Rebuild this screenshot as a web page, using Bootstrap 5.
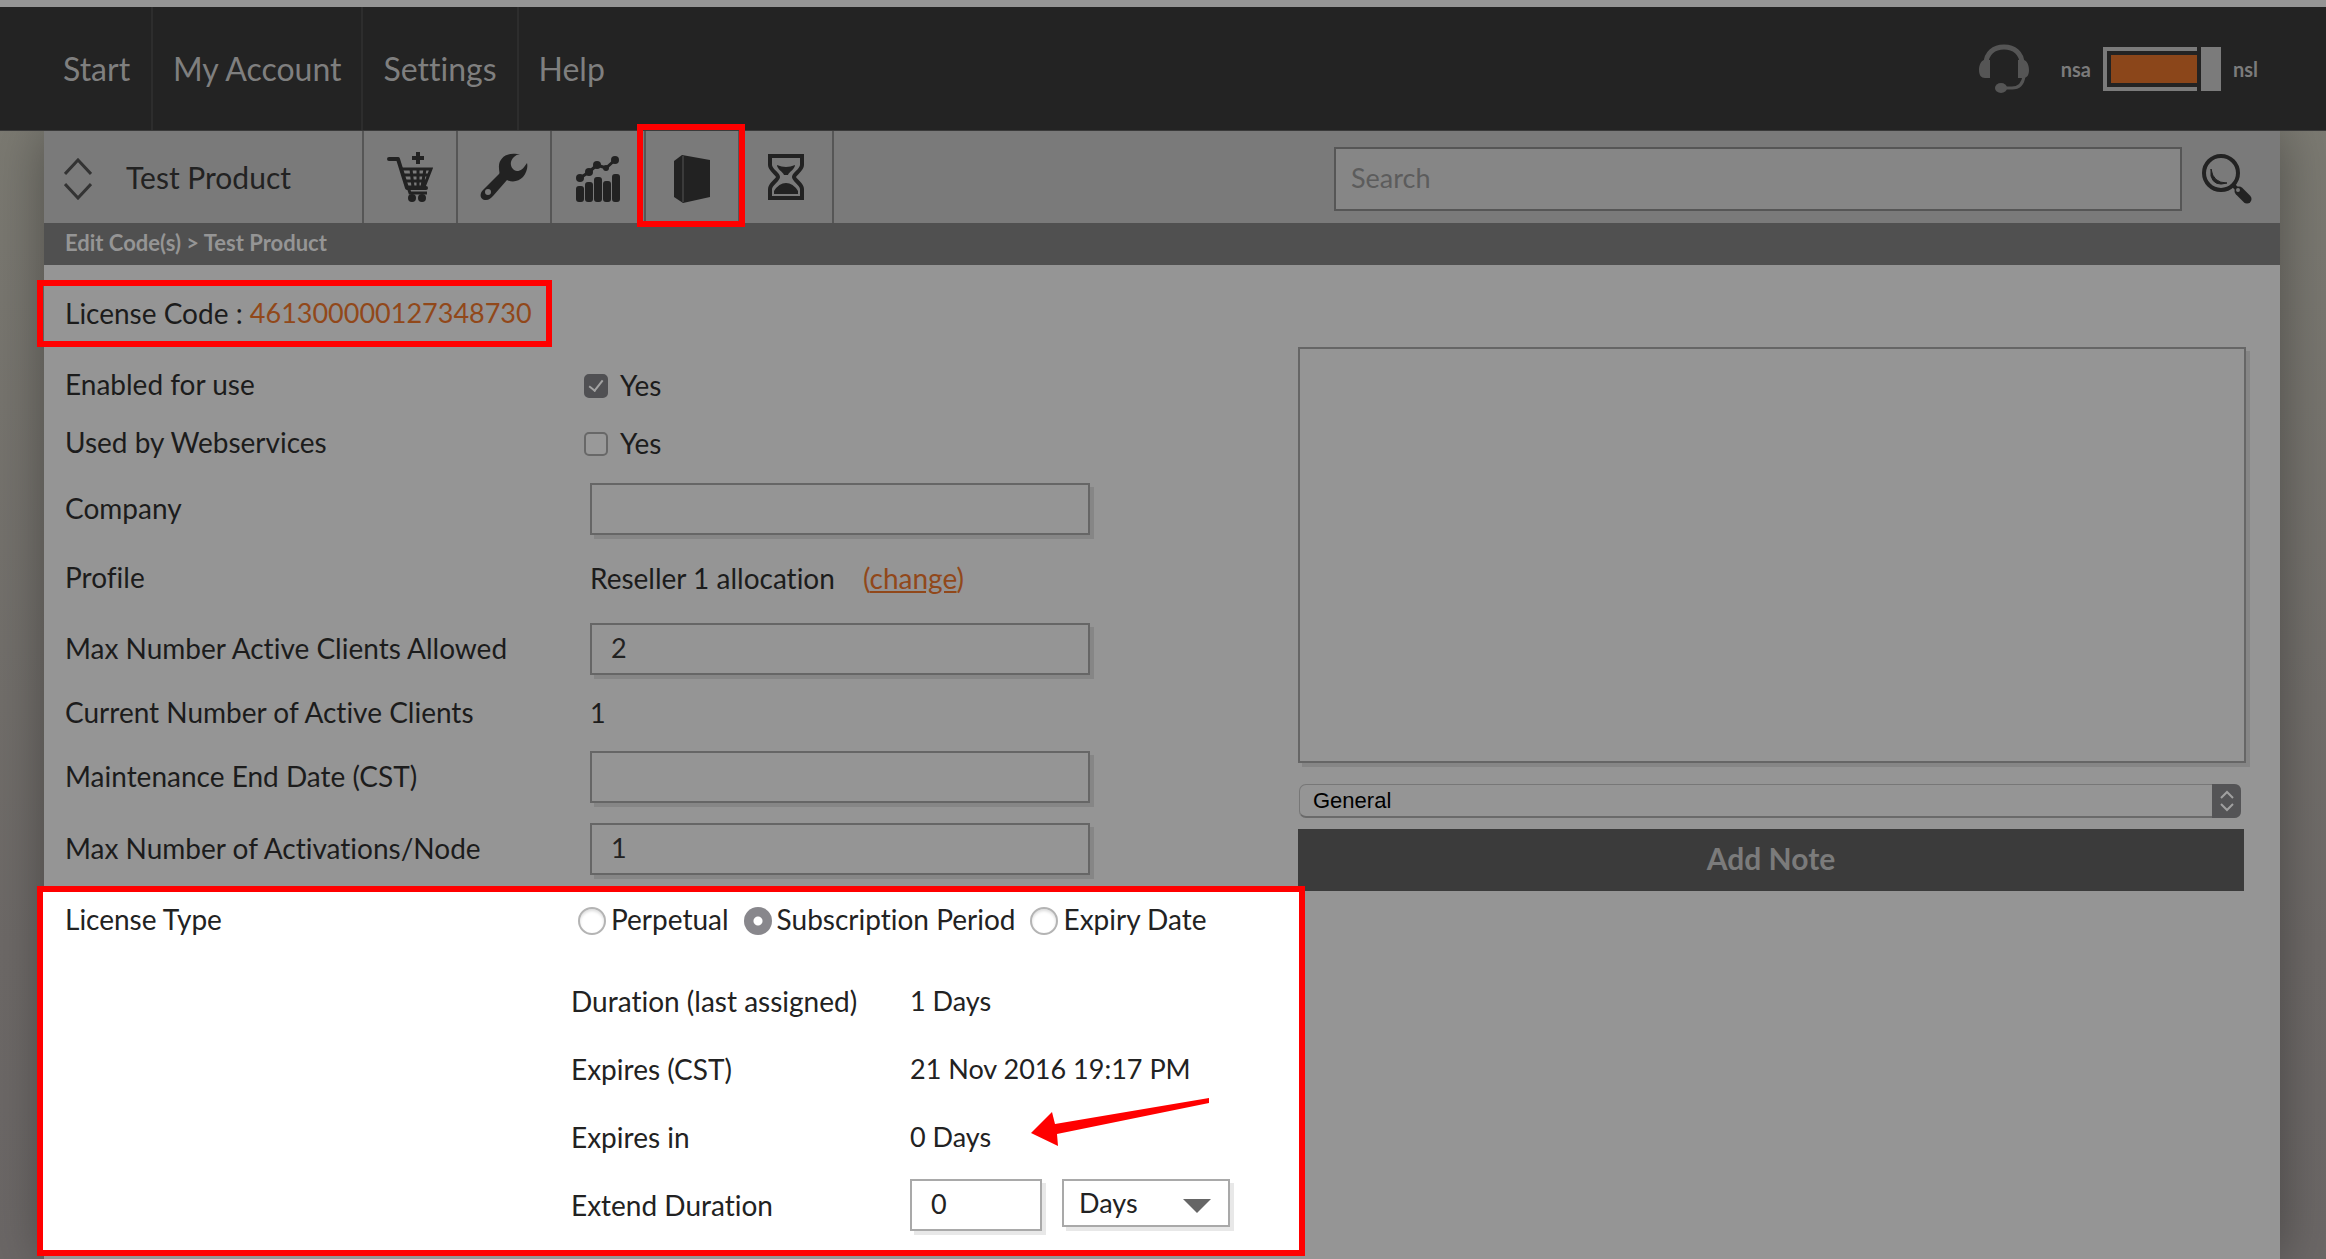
<!DOCTYPE html>
<html lang="en">
<head>
<meta charset="utf-8">
<meta name="viewport" content="width=device-width, initial-scale=1">
<title>Edit Code(s) - Test Product</title>
<link href="https://cdn.jsdelivr.net/npm/bootstrap@5.3.0/dist/css/bootstrap.min.css" rel="stylesheet">
<style>
  body { font-family: Lato, "Open Sans", sans-serif; font-size: 28px; line-height: 34px; color: #1c1c1c; font-variant-ligatures: none;
    background: linear-gradient(#7d7c73, #6d6967 75%, #6b6766); overflow-x: hidden; }
  .topbar { background: #232323; border-top: 7px solid #959595; border-bottom: 1px solid #3a3a3a; height: 131px; padding: 0 68px 0 24px; position: relative; z-index: 1; }
  .topbar .nav-link { color: #7f7f7f; font-size: 32px; padding: 0 20px; display: flex; align-items: center; border-left: 2px solid #2d2d2d; }
  .topbar .nav-item:first-child .nav-link { border-left: 0; padding-left: 39px; width: 127px; }
  .topbar .switch-text { color: #7b7b7b; font-size: 20px; font-weight: 700; line-height: 24px; }
  .switch { border: 0; padding: 0; background: none; width: 118px; height: 44px; }
  .panel { background: #959595; margin: 0 46px 0 44px; box-shadow: 0 0 50px rgba(0,0,0,.35); }
  .toolbar { background: #7a7a7a; height: 92px; }
  .toolbar .product { width: 318px; padding-left: 20px; font-size: 30px; color: #222; gap: 34px; }
  .toolbar .tool { width: 94px; border-left: 2px solid #565656; color: #222; position: relative; }
  .toolbar .tool-end { width: 96px; border-right: 2px solid #565656; }
  .marker { position: absolute; border: 6px solid #f00; inset: -7px -7px -4px -9px; z-index: 2; }
  .search { width: 848px; height: 64px; border: 2px solid #565656; border-radius: 0; background: #868686; font-size: 27px; padding: 0 15px 4px; }
  .search::placeholder { color: #5c5c5c; }
  .search:focus { background: #868686; }
  .find { margin: 0 28px 0 20px; }
  .crumbs { background: #505050; color: #959595; height: 42px; font-size: 22px; font-weight: 700; padding-left: 21px; line-height: 40px; }
  .crumbs a { color: inherit; text-decoration: none; }
  .form-side { flex: 0 1 1254px; }
  .note-side { flex: 1 1 0; padding: 82px 34px 0 0; }
  .code-box { border: 6px solid #f00; margin: 15px 0 9px -7px; padding: 0 20px 2px 22px; height: 67px; width: 515px; }
  .digits { font-size: 27px; }
  .orange { color: #91481a; }
  .line { padding-left: 21px; }
  .line-58 { height: 58px; } .line-74 { height: 74px; } .line-64 { height: 64px; }
  .line-78 { height: 78px; } .line-50 { height: 50px; } .line-66 { height: 66px; }
  .line .name { width: 525px; }
  .line .name, .type-head .name, .type-head label { padding-bottom: 2px; }
  .change-link { margin-left: 28px; }
  .field { border: 2px solid #666; border-radius: 0; background: #959595; color: #222; font-size: 27px; height: 52px; box-shadow: 4px 4px 0 #868686; padding: 0 19px 4px; }
  .field-wide { width: 500px; }
  .tick { appearance: none; width: 24px; height: 24px; border: 2px solid #686868; border-radius: 5px; margin: 2px 12px 0 -6px; background: #999; position: relative; }
  .tick:checked { background: #505053; border-color: #505053; }
  .tick:checked::after { content: ""; position: absolute; left: 6px; top: 1px; width: 8px; height: 14px; border: solid #a2a2a2; border-width: 0 2px 2px 0; transform: rotate(38deg); }
  .type-box { border: 6px solid #f00; background: #fff; margin: 4px -7px 0; padding-bottom: 11px; position: relative; z-index: 2; color: #222; }
  .type-head { height: 55px; padding-left: 22px; margin-bottom: 20px; }
  .type-head .name { width: 513px; }
  .type-head label { margin-right: 15px; }
  .dot { appearance: none; width: 28px; height: 28px; border-radius: 50%; border: 2px solid #b4b4b4; background: #fff; box-shadow: inset 0 2px 3px #ddd; margin: 2px 5px 0 0; }
  .dot:checked { border: 0; background: radial-gradient(circle, #fff 4px, #88878c 5px); box-shadow: none; }
  .type-line { height: 68px; padding-left: 528px; }
  .type-line .name { width: 339px; }
  .type-box .field { background: #fff; border-color: #a9a9a9; box-shadow: 4px 4px 0 #e8e8e8; }
  .type-box .short { width: 132px; margin-right: 20px; }
  .unit { width: 168px; height: 48px !important; appearance: none; padding: 0 15px !important; }
  .unit-mark { position: absolute; right: 19px; top: 20px; pointer-events: none; }
  .arrow { position: absolute; left: 988px; top: 206px; }
  .notes { border: 2px solid #666; border-radius: 0; background: #959595; height: 416px; width: 100%; box-shadow: 4px 4px 0 #868686; resize: none; display: block; }
  .kind-wrap { margin: 21px 5px 11px 1px; }
  .kind { appearance: none; width: 100%; height: 34px; border: 1px solid #777; border-bottom: 2px solid #6a6a6a; border-radius: 7px; background: #959595; color: #000; font: 22px/26px "Liberation Sans", Arial, sans-serif; padding: 1px 13px 0; display: block; }
  .kind-mark { position: absolute; right: 0; top: 0; pointer-events: none; }
  .add { background: #3b3b3b; color: #7b7b7b; border: 0; border-radius: 0; height: 62px; font-size: 30px; font-weight: 700; margin-right: 2px; padding: 0 0 4px; }
</style>
</head>
<body class="d-flex flex-column min-vh-100">
<header class="topbar d-flex justify-content-between">
  <ul class="nav">
    <li class="nav-item d-flex"><a class="nav-link" href="#">Start</a></li>
    <li class="nav-item d-flex"><a class="nav-link" href="#">My Account</a></li>
    <li class="nav-item d-flex"><a class="nav-link" href="#">Settings</a></li>
    <li class="nav-item d-flex"><a class="nav-link" href="#">Help</a></li>
  </ul>
  <div class="d-flex align-items-center">
    <a href="#" aria-label="Support" class="d-flex me-4"><svg width="50" height="50" viewBox="0 0 50 50" fill="none" stroke="#555"><path d="M7 20C7 9 15 3 25 3s18 6 18 17" stroke-width="5"/><path d="M45 32c-1 8-5 12-12 12H22" stroke-width="3"/><path d="M11 16v18H6c-4 0-6-3-6-8s2-9 5-10zM39 16v18h5c4 0 6-3 6-8s-2-9-5-10z" fill="#555" stroke="none"/><ellipse cx="22" cy="44" rx="6" ry="5" fill="#555" stroke="none"/></svg></a>
    <span class="switch-text ms-2 me-2">nsa</span>
    <button class="switch ms-1 me-1" type="button" role="switch" aria-checked="true" aria-label="nsa or nsl"><svg class="d-block" width="118" height="44"><path d="M94 2H2v40h92" fill="none" stroke="#7b7b7b" stroke-width="4"/><path d="M8 8h86v28H8z" fill="#8b461a"/><path d="M98 0h20v44H98z" fill="#7b7b7b"/></svg></button>
    <span class="switch-text ms-2">nsl</span>
  </div>
</header>

<main class="panel flex-grow-1">
  <div class="toolbar d-flex align-items-stretch">
    <div class="product d-flex align-items-center">
      <svg width="28" height="42" viewBox="0 0 28 42" fill="none" stroke="#333" stroke-width="3" class="mt-1"><path d="M1 16L14 2l13 14M1 26l13 14 13-14"/></svg>
      <span>Test Product</span>
    </div>
    <a class="tool d-flex align-items-center justify-content-center" href="#" aria-label="Purchase"><svg width="46" height="50" viewBox="0 0 46 50" fill="none" stroke="#222"><path d="M2 7h9l9 29h19" stroke-width="4" stroke-linecap="round" stroke-linejoin="round"/><path d="M14 17h30l-7 18H20M16 23h26M18 29h22M24 17l2 18M31 17v18M38 17l-3 18" stroke-width="3"/><path d="M21 35l2 6h17" stroke-width="3"/><circle cx="25" cy="46" r="4" fill="#222" stroke="none"/><circle cx="35" cy="46" r="4" fill="#222" stroke="none"/><path d="M31 0v12M25 6h12" stroke-width="4"/></svg></a>
    <a class="tool d-flex align-items-center justify-content-center" href="#" aria-label="Tools"><svg width="48" height="48" viewBox="0 0 48 48" fill="#222"><path fill-rule="evenodd" d="M37 1C26-1 18 6 19 15c0 3 1 5 0 6L3 37c-4 4-3 10 3 10 3 0 5-2 7-4l14-16c6 3 12 1 16-3 4-5 5-10 4-14-4 6-6 8-10 8s-7-5-6-9 4-7 9-8zM8 36a3 3 0 1 1 0 6 3 3 0 0 1 0-6z"/></svg></a>
    <a class="tool d-flex align-items-center justify-content-center" href="#" aria-label="Reports"><svg width="46" height="46" viewBox="0 0 46 46" fill="#222" class="mt-1"><rect x="1" y="30" width="8" height="16" rx="3"/><rect x="10" y="26" width="8" height="20" rx="3"/><rect x="19" y="21" width="8" height="25" rx="3"/><rect x="28" y="25" width="8" height="21" rx="3"/><rect x="37" y="18" width="8" height="28" rx="3"/><path d="M5 22l9-6 8-7 9 3 9-8" fill="none" stroke="#222" stroke-width="3"/><circle cx="5" cy="22" r="4"/><circle cx="14" cy="16" r="4"/><circle cx="22" cy="9" r="4"/><circle cx="31" cy="12" r="3"/><circle cx="40" cy="4" r="4"/></svg></a>
    <a class="tool d-flex align-items-center justify-content-center" href="#" aria-label="Products"><svg width="36" height="48" viewBox="0 0 36 48" class="mt-1"><path d="M0 6l8-6 28 5v37L9 48l-9-6z" fill="#222"/><path d="M9 1v46" stroke="#555" stroke-width="1"/></svg><span class="marker"></span></a>
    <a class="tool tool-end d-flex align-items-center justify-content-center" href="#" aria-label="History"><svg width="36" height="46" viewBox="0 0 36 46" fill="none" stroke="#222"><path d="M2 2h32v9c0 5-8 9-8 12s8 7 8 12v9H2v-9c0-5 8-9 8-12S2 16 2 11z" stroke-width="4"/><path d="M9 11q9 4 18 0c0 4-6 7-7 10h-4c-1-3-7-6-7-10zM6 40v-3q5-8 12-8t12 8v3z" fill="#222" stroke="none"/></svg></a>
    <form class="d-flex align-items-center ms-auto pt-1" role="search">
      <input class="form-control search" type="search" placeholder="Search" aria-label="Search">
      <button class="btn find p-0 border-0 d-flex" type="submit" aria-label="Find"><svg width="50" height="50" viewBox="0 0 50 50" fill="none" stroke="#222"><circle cx="19" cy="19" r="17" stroke-width="4"/><path d="M9 15q2 14 16 14Q12 33 9 22z" fill="#222" stroke-width="1"/><path d="M32 32l3 3" stroke-width="4"/><path d="M37 37l8 8" stroke-width="9" stroke-linecap="round"/><circle cx="36" cy="36" r="1" stroke="#777" stroke-width="2"/></svg></button>
    </form>
  </div>
  <nav class="crumbs" aria-label="breadcrumb"><a href="#">Edit Code(s)</a> &gt; Test Product</nav>

  <div class="d-flex">
    <form class="form-side">
      <div class="code-box d-flex align-items-center text-nowrap"><span>License Code :&nbsp;</span><span class="orange digits">461300000127348730</span></div>
      <div class="line line-58 d-flex align-items-center"><span class="name">Enabled for use</span><input class="tick" type="checkbox" id="enabled" checked><label for="enabled">Yes</label></div>
      <div class="line line-58 d-flex align-items-center"><span class="name">Used by Webservices</span><input class="tick" type="checkbox" id="web"><label for="web">Yes</label></div>
      <div class="line line-74 d-flex align-items-center"><label class="name" for="company">Company</label><input class="form-control field field-wide" id="company" type="text"></div>
      <div class="line line-64 d-flex align-items-center"><span class="name">Profile</span><span>Reseller 1 allocation</span><span class="orange change-link">(<a class="orange" href="#">change</a>)</span></div>
      <div class="line line-78 d-flex align-items-center"><label class="name" for="maxc">Max Number Active Clients Allowed</label><input class="form-control field field-wide" id="maxc" type="text" value="2"></div>
      <div class="line line-50 d-flex align-items-center"><span class="name">Current Number of Active Clients</span><span class="digits">1</span></div>
      <div class="line line-78 d-flex align-items-center"><label class="name" for="mdate">Maintenance End Date (CST)</label><input class="form-control field field-wide" id="mdate" type="text"></div>
      <div class="line line-66 d-flex align-items-center"><label class="name" for="maxa">Max Number of Activations/Node</label><input class="form-control field field-wide" id="maxa" type="text" value="1"></div>

      <div class="type-box">
        <div class="type-head d-flex align-items-center">
          <span class="name">License Type</span>
          <input class="dot" type="radio" name="type" id="t1"><label for="t1">Perpetual</label>
          <input class="dot" type="radio" name="type" id="t2" checked><label for="t2">Subscription Period</label>
          <input class="dot" type="radio" name="type" id="t3"><label for="t3">Expiry Date</label>
        </div>
        <div class="type-line d-flex align-items-center"><span class="name">Duration (last assigned)</span><span class="digits">1 Days</span></div>
        <div class="type-line d-flex align-items-center"><span class="name">Expires (CST)</span><span class="digits">21 Nov 2016 19:17 PM</span></div>
        <div class="type-line d-flex align-items-center"><span class="name">Expires in</span><span class="digits">0 Days</span></div>
        <div class="type-line d-flex align-items-center"><label class="name" for="ext">Extend Duration</label>
          <div class="d-flex align-items-start">
            <input class="form-control field short" id="ext" type="text" value="0">
            <div class="position-relative"><select class="field unit" aria-label="Duration unit"><option>Days</option><option>Months</option></select><svg class="unit-mark" width="28" height="14"><path d="M0 0h28L14 14z" fill="#666"/></svg></div>
          </div>
        </div>
        <svg class="arrow" width="178" height="50" viewBox="0 0 178 50" fill="#f00"><path d="M0 35l21-21 3 12L178 0v5L26 36l1 12z"/></svg>
      </div>
    </form>

    <form class="note-side">
      <textarea class="form-control notes" aria-label="Note"></textarea>
      <div class="kind-wrap position-relative"><select class="kind" aria-label="Note type"><option>General</option><option>Technical</option></select><svg class="kind-mark" width="29" height="34"><path d="M0 0h22q7 0 7 7v20q0 7-7 7H0z" fill="#545456"/><path d="M9 14l6-6 6 6M9 20l6 6 6-6" fill="none" stroke="#a0a0a0" stroke-width="2"/></svg></div>
      <div class="d-grid"><button class="btn add" type="submit">Add Note</button></div>
    </form>
  </div>
</main>
<script src="https://cdn.jsdelivr.net/npm/bootstrap@5.3.0/dist/js/bootstrap.bundle.min.js"></script>
</body>
</html>
